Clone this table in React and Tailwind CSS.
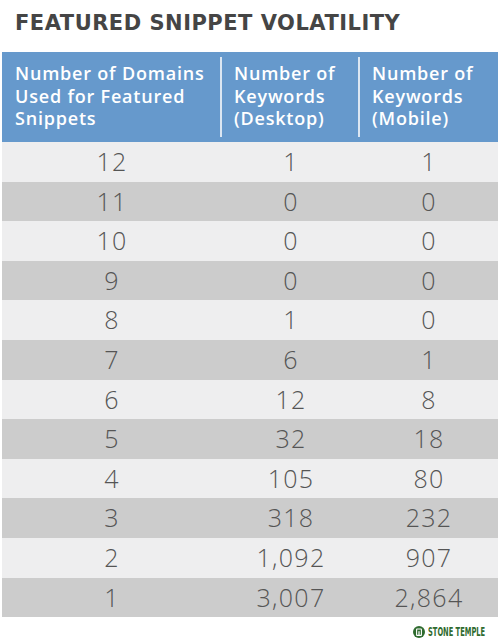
const rows = [
  ['12', '1', '1'],
  ['11', '0', '0'],
  ['10', '0', '0'],
  ['9', '0', '0'],
  ['8', '1', '0'],
  ['7', '6', '1'],
  ['6', '12', '8'],
  ['5', '32', '18'],
  ['4', '105', '80'],
  ['3', '318', '232'],
  ['2', '1,092', '907'],
  ['1', '3,007', '2,864'],
];

function StoneTempleLogo() {
  return (
    <div className="flex items-center h-[12px] gap-[3px]">
      <svg width="12" height="12" viewBox="0 0 12 12">
        <circle cx="6" cy="6" r="6" fill="#2f6b2f" />
        <rect x="3.6" y="3" width="4.8" height="6.4" rx="0.4" fill="none" stroke="#ffffff" strokeWidth="1.1" />
        <rect x="5.4" y="5.2" width="1.2" height="3.8" fill="#ffffff" />
      </svg>
      <div className="flex items-center h-[12px] w-[59px]">
        <span
          className="block text-[12px] font-bold leading-[12px] text-[#2f6b2f] scale-x-[0.62] origin-left whitespace-nowrap"
          style={{ fontFamily: '"DejaVu Sans Condensed", "DejaVu Sans", sans-serif' }}
        >
          STONE TEMPLE
        </span>
      </div>
    </div>
  );
}

export default function App() {
  return (
    <div className="w-[500px] h-[643px] bg-white overflow-hidden" style={{ fontFamily: '"Open Sans", "Liberation Sans", sans-serif' }}>
      <h1
        className="pl-[15px] pt-[11px] h-[52px] text-[21px] font-bold leading-[25px] tracking-[0.5px] text-[#454545]"
        style={{ fontFamily: '"DejaVu Sans", "Open Sans", sans-serif' }}
      >
        FEATURED SNIPPET VOLATILITY
      </h1>

      <div className="mx-[2px] w-[496px]">
        {/* Header */}
        <div className="grid grid-cols-[220px_138px_138px] h-[90px] py-[5px] bg-[#6699cc] text-white text-[18px] font-semibold leading-[22.5px] tracking-[0.8px]">
          <div className="pl-[13px] pt-[5px] border-r-2 border-[#dbe6f2]">
            Number of Domains Used for Featured Snippets
          </div>
          <div className="pl-[12px] pt-[5px] border-r-2 border-[#dbe6f2]">
            Number of Keywords (Desktop)
          </div>
          <div className="pl-[12px] pt-[5px]">Number of Keywords (Mobile)</div>
        </div>

        {/* Rows */}
        {rows.map((row, i) => (
          <div
            key={row[0]}
            className={`grid grid-cols-[220px_138px_138px] h-[39.6px] items-center text-[25px] font-light tracking-[1.3px] text-[#555555] ${
              i % 2 === 0 ? 'bg-[#eeeeef]' : 'bg-[#cccccc]'
            }`}
          >
            <div className="text-center">{row[0]}</div>
            <div className="text-center">{row[1]}</div>
            <div className="text-center">{row[2]}</div>
          </div>
        ))}
      </div>

      <div className="flex justify-end pr-[13px] pt-[9px]">
        <StoneTempleLogo />
      </div>
    </div>
  );
}
